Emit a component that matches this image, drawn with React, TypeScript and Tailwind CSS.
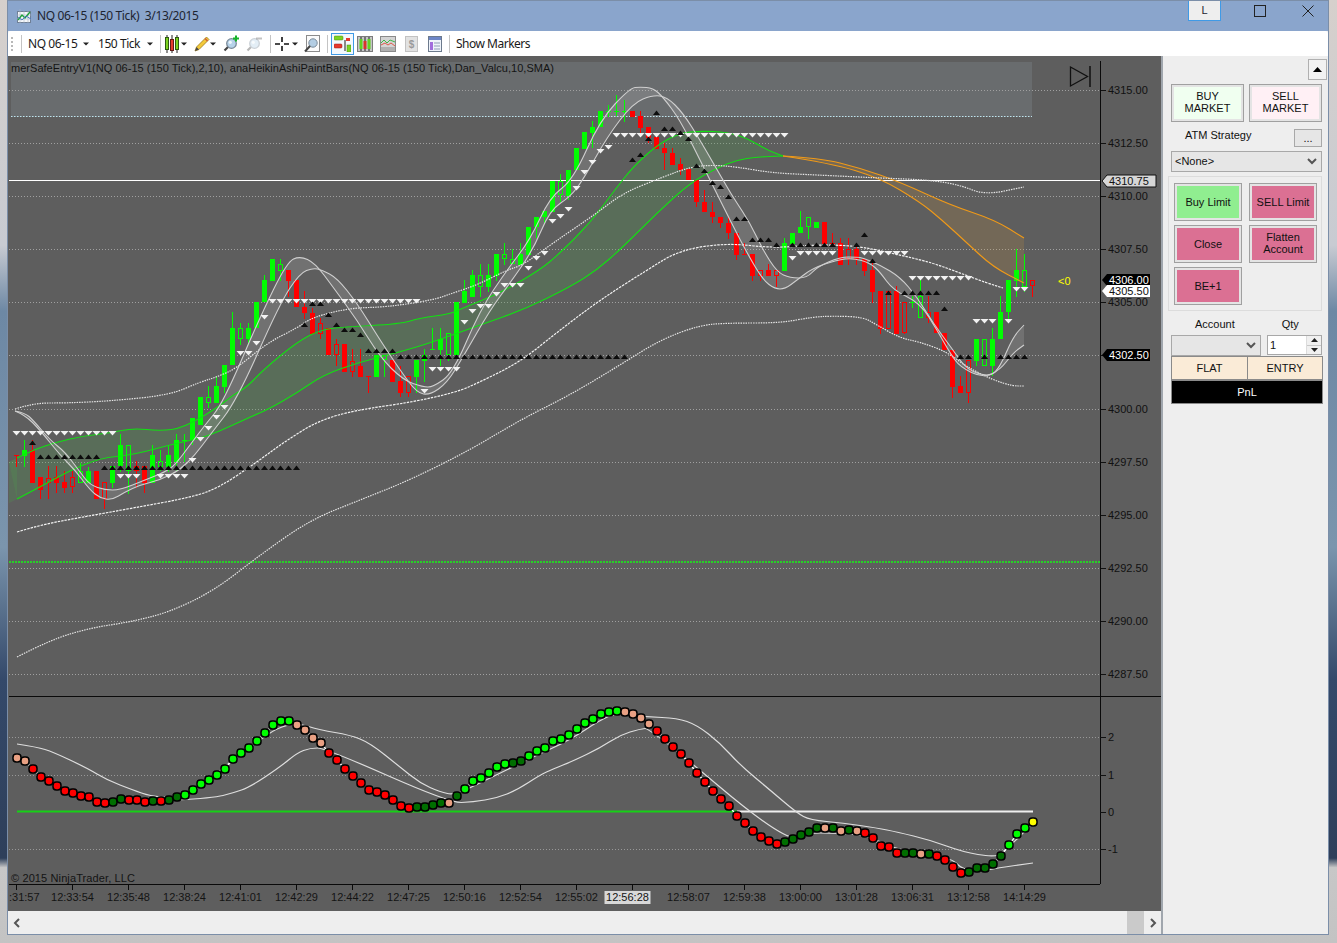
import React from 'react';

type P = [number, number];
type Bar = [number, number, number, number, number, string];

const bars: Bar[] = [
  [16, 455, 456, 455, 467, 'r'], [24, 450, 456, 440, 467, 'g'], [32, 450, 483, 440, 483, 'r'], [40, 477, 490, 477, 499, 'r'],
  [48, 478, 483, 466, 499, 'R'], [56, 477, 483, 466, 493, 'r'], [64, 482, 488, 471, 493, 'r'], [72, 477, 487, 471, 493, 'R'],
  [80, 471, 483, 463, 483, 'G'], [88, 471, 483, 467, 483, 'g'], [96, 471, 499, 471, 499, 'r'], [104, 482, 499, 482, 509, 'R'],
  [112, 466, 483, 466, 488, 'g'], [120, 445, 466, 434, 472, 'g'], [128, 445, 471, 445, 494, 'G'], [136, 466, 471, 461, 488, 'r'],
  [144, 466, 483, 466, 493, 'r'], [152, 455, 483, 445, 483, 'g'], [160, 461, 467, 450, 471, 'G'], [168, 455, 467, 445, 472, 'g'],
  [176, 440, 462, 434, 471, 'g'], [184, 440, 441, 434, 462, 'g'], [192, 418, 440, 418, 445, 'g'], [200, 397, 425, 397, 425, 'g'],
  [208, 397, 403, 386, 408, 'G'], [216, 386, 403, 376, 403, 'g'], [224, 365, 387, 365, 393, 'g'], [232, 328, 365, 312, 365, 'g'],
  [240, 328, 339, 323, 345, 'G'], [248, 328, 339, 323, 345, 'g'], [256, 302, 328, 302, 328, 'g'], [264, 280, 302, 275, 302, 'g'],
  [272, 259, 281, 259, 281, 'g'], [280, 264, 271, 259, 281, 'G'], [288, 270, 281, 270, 297, 'r'], [296, 280, 307, 280, 307, 'r'],
  [304, 307, 313, 291, 319, 'r'], [312, 313, 334, 308, 334, 'r'], [320, 323, 334, 318, 339, 'R'], [328, 328, 355, 328, 355, 'r'],
  [336, 344, 355, 339, 366, 'R'], [344, 344, 372, 344, 372, 'r'], [352, 361, 372, 349, 377, 'R'], [360, 366, 377, 349, 377, 'r'],
  [368, 376, 377, 376, 393, 'r'], [376, 355, 377, 355, 377, 'g'], [384, 355, 360, 355, 377, 'G'], [392, 360, 382, 360, 382, 'r'],
  [400, 381, 393, 366, 397, 'r'], [408, 376, 393, 376, 397, 'R'], [416, 360, 377, 360, 393, 'g'], [424, 355, 361, 349, 382, 'g'],
  [432, 349, 350, 328, 350, 'g'], [440, 339, 350, 328, 366, 'g'], [448, 333, 355, 333, 361, 'G'], [456, 302, 355, 302, 355, 'g'],
  [464, 291, 303, 280, 303, 'g'], [472, 275, 297, 270, 297, 'g'], [480, 275, 287, 264, 297, 'G'], [488, 275, 287, 264, 292, 'g'],
  [496, 254, 276, 254, 281, 'g'], [504, 254, 259, 243, 265, 'G'], [512, 259, 264, 249, 264, 'G'], [520, 254, 265, 243, 265, 'g'],
  [528, 227, 255, 227, 255, 'g'], [536, 217, 227, 217, 238, 'g'], [544, 211, 217, 211, 223, 'g'], [552, 181, 212, 181, 212, 'g'],
  [560, 181, 195, 174, 202, 'G'], [568, 170, 196, 170, 200, 'g'], [576, 148, 170, 148, 170, 'g'], [584, 132, 149, 132, 149, 'g'],
  [592, 127, 133, 121, 148, 'g'], [600, 111, 127, 111, 127, 'g'], [608, 111, 112, 105, 117, 'g'], [616, 111, 112, 95, 116, 'g'],
  [624, 111, 112, 100, 122, 'g'], [632, 111, 117, 111, 117, 'r'], [640, 116, 128, 111, 133, 'r'], [648, 127, 138, 127, 143, 'r'],
  [656, 137, 149, 137, 149, 'r'], [664, 148, 153, 143, 170, 'r'], [672, 153, 165, 148, 165, 'r'], [680, 164, 170, 158, 175, 'r'],
  [688, 169, 180, 169, 180, 'r'], [696, 180, 202, 180, 207, 'r'], [704, 202, 212, 190, 212, 'r'], [712, 212, 217, 202, 223, 'r'],
  [720, 217, 223, 217, 228, 'r'], [728, 223, 233, 217, 239, 'r'], [736, 233, 255, 233, 260, 'r'], [744, 254, 255, 243, 255, 'r'],
  [752, 254, 276, 254, 281, 'r'], [760, 270, 276, 270, 281, 'R'], [768, 270, 276, 264, 276, 'r'], [776, 270, 276, 270, 287, 'R'],
  [784, 243, 271, 238, 271, 'g'], [792, 233, 244, 233, 244, 'g'], [800, 227, 233, 211, 233, 'g'], [808, 217, 227, 217, 239, 'G'],
  [816, 222, 228, 222, 228, 'g'], [824, 222, 244, 222, 244, 'r'], [832, 243, 244, 233, 244, 'r'], [840, 243, 265, 238, 265, 'r'],
  [848, 249, 259, 238, 265, 'R'], [856, 249, 260, 243, 265, 'r'], [864, 259, 271, 259, 276, 'r'], [872, 270, 292, 260, 303, 'r'],
  [880, 291, 329, 291, 334, 'r'], [888, 291, 329, 291, 329, 'R'], [896, 291, 334, 286, 334, 'r'], [904, 302, 333, 302, 334, 'R'],
  [912, 302, 303, 296, 308, 'g'], [920, 296, 318, 279, 318, 'G'], [928, 312, 318, 296, 323, 'R'], [936, 312, 333, 312, 333, 'r'],
  [944, 333, 350, 333, 350, 'r'], [952, 350, 387, 350, 398, 'r'], [960, 386, 393, 376, 393, 'r'], [968, 360, 393, 360, 403, 'R'],
  [976, 339, 361, 339, 366, 'g'], [984, 339, 366, 339, 366, 'G'], [992, 339, 366, 328, 376, 'g'], [1000, 312, 339, 296, 339, 'g'],
  [1008, 280, 312, 280, 320, 'g'], [1016, 270, 281, 249, 297, 'g'], [1024, 270, 287, 254, 292, 'G'], [1032, 280, 286, 280, 297, 'R'],
];

const lineA: P[] = [[15,411],[25,413],[33,420],[50,440],[65,452],[80,472],[90,485],[105,490],[120,490],[145,480],[165,472],[175,465],[190,445],[205,425],[223,403],[260,317],[287,262],[300,256],[315,263],[333,287],[357,320],[380,357],[403,380],[423,387],[433,387],[453,373],[480,310],[507,270],[530,240],[550,197],[573,180],[600,120],[630,88],[640,87],[653,88],[663,97],[680,120],[700,160],[715,190],[730,220],[747,253],[763,280],[775,289],[785,289],[797,280],[813,268],[837,260],[853,258],[870,263],[880,272],[893,290],[920,303],[937,330],[950,353],[960,367],[983,378],[1000,370],[1013,353],[1024,345]];
const lineB: P[] = [[15,411],[25,415],[40,430],[60,455],[75,470],[90,490],[100,498],[112,500],[125,492],[140,485],[160,480],[180,470],[195,455],[210,435],[237,400],[280,303],[300,273],[313,268],[322,270],[337,278],[357,303],[380,340],[400,370],[417,393],[430,395],[447,383],[463,357],[490,310],[510,283],[533,250],[550,210],[570,197],[583,180],[607,137],[633,103],[653,95],[667,97],[683,113],[700,140],[727,187],[735,200],[750,223],[763,250],[777,272],[790,278],[807,278],[817,267],[840,257],[857,257],[863,258],[880,265],[900,277],[917,297],[933,323],[953,350],[967,370],[990,377],[1000,367],[1013,337],[1024,325]];
const cloudUp: P[] = [[17,458],[33,450],[57,442],[83,436],[110,433],[133,428],[160,431],[183,428],[217,408],[233,395],[247,387],[263,370],[297,342],[320,330],[343,327],[400,324],[420,318],[450,314],[463,308],[500,293],[540,270],[560,253],[590,223],[617,187],[633,167],[657,145],[680,133],[700,131],[727,132],[747,138],[767,150],[783,156]];
const cloudLo: P[] = [[17,499],[40,487],[67,472],[100,458],[133,455],[177,443],[207,437],[250,417],[267,410],[297,393],[323,375],[360,362],[400,352],[433,342],[480,325],[523,310],[570,287],[597,270],[623,247],[657,213],[690,183],[717,168],[737,160],[757,157],[783,156]];
const orUp: P[] = [[783,156],[820,158],[860,168],[900,182],[950,205],[995,220],[1024,238]];
const orLo: P[] = [[783,156],[830,163],[880,178],[920,202],[942,220],[967,243],[993,267],[1024,283]];
const dotTop: P[] = [[15,409],[33,403],[67,403],[110,401],[170,395],[200,382],[217,377],[237,368],[267,343],[297,328],[313,317],[350,308],[387,307],[433,300],[453,293],[477,285],[507,270],[523,265],[553,243],[597,213],[623,193],[663,177],[690,167],[713,165],[737,167],[773,173],[817,175],[880,178],[930,180],[960,185],[985,195],[1024,187]];
const dotMid: P[] = [[17,532],[40,525],[83,517],[133,508],[193,497],[220,487],[257,462],[287,440],[320,420],[357,410],[413,402],[457,392],[480,382],[520,362],[560,330],[600,300],[647,270],[680,250],[727,243],[773,248],[813,245],[837,245],[863,247],[900,255],[933,263],[960,273],[987,283],[1003,288]];
const dotLow: P[] = [[17,657],[50,640],[90,628],[130,622],[170,612],[215,590],[260,555],[310,520],[360,500],[410,480],[470,450],[520,420],[570,395],[620,365],[660,340],[700,325],[730,323],[780,323],[813,317],[833,316],[863,317],[877,325],[900,338],[920,342],[947,352],[967,367],[993,380],[1013,386],[1024,386]];
const oscTop: P[] = [[17,744],[37,747],[53,752],[87,768],[107,780],[133,790],[150,796],[173,798],[197,790],[230,762],[257,742],[277,728],[297,723],[320,730],[350,735],[370,743],[400,767],[420,783],[440,792],[455,795],[480,783],[533,757],[570,740],[600,720],[617,713],[647,717],[677,718],[697,725],[720,743],[740,765],[770,790],[797,813],[810,820],[843,823],[877,828],[897,832],[930,840],[963,852],[993,857],[1003,853],[1033,823]];
const oscLow: P[] = [[177,800],[213,798],[233,793],[250,787],[280,767],[297,753],[310,748],[325,748],[450,803],[473,802],[497,798],[517,790],[540,775],[553,769],[573,761],[600,748],[620,735],[640,729],[650,728],[785,842],[810,833],[830,833],[853,834],[873,838],[897,850],[950,857],[963,870],[983,871],[997,868],[1033,863]];

const dotY = [758,761,769,777,781,786,791,793,796,797,802,803,802,799,800,800,802,801,801,800,797,795,790,784,780,775,769,759,753,748,741,733,725,721,721,725,730,738,743,753,760,769,776,783,790,792,795,800,806,808,807,807,805,803,803,796,789,781,778,773,767,764,763,761,756,751,748,741,739,735,729,723,719,714,712,711,712,714,718,724,731,739,747,754,763,773,782,791,799,806,816,823,831,837,841,844,842,839,835,832,828,828,828,831,830,831,833,838,846,847,853,853,853,854,854,856,860,867,873,872,868,868,864,856,845,834,828,822];

const RED = '#ff0000', LIME = '#00ff00', DK = '#006e00', SAL = '#e9a083', YEL = '#ffff00';
function dotColor(x: number): string {
  if (x === 1033) return YEL;
  if (x === 17 || x === 25) return SAL;
  if (x >= 297 && x <= 321) return SAL;
  if (x === 449 || (x >= 625 && x <= 649) || x === 825 || x === 841 || x === 857 || x === 921) return SAL;
  if ([113, 121, 153, 169, 177].includes(x)) return DK;
  if ((x >= 417 && x <= 441) || x === 457 || x === 513 || x === 521) return DK;
  if ((x >= 785 && x <= 817) || x === 833 || x === 849 || x === 905 || x === 913 || x === 929) return DK;
  if (x >= 969 && x <= 1001) return DK;
  if ((x >= 185 && x <= 289) || (x >= 465 && x <= 505) || (x >= 529 && x <= 617) || (x >= 1009 && x <= 1025)) return LIME;
  return RED;
}

function smooth(pts: P[]): string {
  let d = `M${pts[0][0]} ${pts[0][1]}`;
  for (let i = 1; i < pts.length - 1; i++) {
    const mx = (pts[i][0] + pts[i + 1][0]) / 2;
    const my = (pts[i][1] + pts[i + 1][1]) / 2;
    d += ` Q${pts[i][0]} ${pts[i][1]} ${mx} ${my}`;
  }
  const l = pts[pts.length - 1];
  return d + ` L${l[0]} ${l[1]}`;
}
function band(a: P[], b: P[]): string {
  const back = smooth([...b].reverse()).replace(/^M/, 'L');
  return `${smooth(a)} ${back} Z`;
}
function range(a: number, b: number, s = 8): number[] {
  const r: number[] = [];
  for (let i = a; i <= b; i += s) r.push(i);
  return r;
}

const whiteTri: P[] = [
  ...range(16, 112).map((x) => [x, 433] as P),
  ...[120, 128, 136, 160, 168, 176, 184].map((x) => [x, 476] as P),
  [192, 460], [200, 439], [208, 428], [216, 417], [224, 407], [240, 353], [248, 353], [256, 343], [264, 317],
  ...range(272, 416).map((x) => [x, 301] as P),
  [424, 391], [432, 369], [440, 369], [448, 369], [456, 369], [464, 322], [472, 311], [480, 306], [488, 306], [496, 294], [504, 285], [512, 285], [520, 285], [528, 268], [536, 258], [544, 253], [552, 221], [560, 216], [568, 209], [576, 188], [584, 172], [592, 162], [600, 151], [608, 147],
  ...range(616, 784).map((x) => [x, 135] as P),
  [792, 258],
  ...range(800, 832).map((x) => [x, 253] as P),
  ...range(864, 904).map((x) => [x, 253] as P),
  ...range(912, 968).map((x) => [x, 278] as P),
  [976, 321], [984, 321], [992, 321], [1008, 321], [1016, 289], [1024, 289],
];
const blackTri: P[] = [
  [32, 443],
  ...range(40, 96).map((x) => [x, 457] as P),
  ...range(104, 296).map((x) => [x, 468] as P),
  [312, 304], [320, 304], [328, 315], [304, 325], [336, 325], [344, 330], [352, 330], [360, 335], [368, 351], [376, 351], [384, 351], [392, 351],
  ...range(400, 628).map((x) => [x, 357] as P),
  [656, 113], [664, 129], [672, 129], [680, 133], [688, 139], [648, 139], [640, 155], [632, 160], [696, 166], [704, 171], [712, 183], [720, 187], [728, 197], [736, 219], [744, 219], [752, 240], [760, 240], [768, 240], [776, 245],
  ...range(792, 832).map((x) => [x, 245] as P),
  [856, 245], [864, 235], [872, 261], [888, 293],
  ...range(904, 936).map((x) => [x, 293] as P),
  [944, 309], [960, 357], [968, 357], [984, 357], [1000, 357], [1008, 357], [1016, 357], [1024, 357],
];

const prices = ['4315.00', '4312.50', '4310.00', '4307.50', '4305.00', '4302.50', '4300.00', '4297.50', '4295.00', '4292.50', '4290.00', '4287.50'];
const times = ['12:33:54', '12:35:48', '12:38:24', '12:41:01', '12:42:29', '12:44:22', '12:47:25', '12:50:16', '12:52:54', '12:55:02', '12:56:28', '12:58:07', '12:59:38', '13:00:00', '13:01:28', '13:06:31', '13:12:58', '14:14:29'];
const GRID = '#a0a0a0';
const F = '"Liberation Sans", Arial, sans-serif';

function PriceTag({ y, fill, color, label, w = 50, stroke }: { y: number; fill: string; color: string; label: string; w?: number; stroke?: string }) {
  return (
    <g>
      <polygon points={`1102,${y} 1107,${y - 6} ${1104 + w},${y - 6} ${1104 + w},${y + 6} 1107,${y + 6}`} fill={fill} stroke={stroke} strokeWidth={stroke ? 1 : 0} />
      <text x={1109} y={y + 4} fontSize={11} fill={color} fontFamily={F}>{label}</text>
    </g>
  );
}

function Chart() {
  return (
    <svg width={1153} height={855} viewBox="8 56 1153 855" className="block">
      <rect x={8} y={56} width={1153} height={855} fill="#5e5e5e" />
      <rect x={11} y={62} width={1021} height={55} fill="#696c6e" />
      {prices.map((p, i) => {
        const y = Math.round(90 + i * 53.09);
        return (
          <g key={p}>
            <line x1={9} x2={1100} y1={y + 0.5} y2={y + 0.5} stroke={GRID} strokeDasharray="1 2" />
            <line x1={1100} x2={1106} y1={y + 0.5} y2={y + 0.5} stroke="#111" />
            <text x={1108} y={y + 4} fontSize={11} fill="#111" fontFamily={F}>{p}</text>
          </g>
        );
      })}
      <line x1={11} x2={1032} y1={116.5} y2={116.5} stroke="#bfe4ee" strokeDasharray="1.5 1.5" />
      <path d={`M9 462 L17 458 ${band(cloudUp, cloudLo).replace(/^M/, 'L')}`} fill="#4f9a4f" fillOpacity={0.26} />
      <polygon points="9,462 17,458 17,499 9,503" fill="#4f9a4f" fillOpacity={0.26} />
      <path d={band(orUp, orLo)} fill="#d99a35" fillOpacity={0.17} />
      <path d={band(lineA, lineB)} fill="#ffffff" fillOpacity={0.12} />
      <line x1={9} x2={1100} y1={180.5} y2={180.5} stroke="#ffffff" />
      <line x1={9} x2={1100} y1={562} y2={562} stroke="#28d028" strokeWidth={2} strokeDasharray="2 1" />
      {bars.map(([x0, t, b, wt, wb, k]) => {
        const x = x0 + 0.5;
        const green = k === 'g' || k === 'G';
        const c = green ? '#00ff00' : '#ff0000';
        const hollow = k === 'G' || k === 'R';
        return (
          <g key={x0}>
            {hollow ? (
              <>
                <line x1={x} x2={x} y1={wt} y2={t} stroke={c} />
                <line x1={x} x2={x} y1={b} y2={wb} stroke={c} />
                <rect x={x - 2} y={t + 0.5} width={4} height={Math.max(b - t - 1, 1)} fill="none" stroke={c} />
              </>
            ) : (
              <>
                <line x1={x} x2={x} y1={wt} y2={wb} stroke={c} />
                <rect x={x - 2.5} y={t} width={5} height={Math.max(b - t, 1)} fill={c} />
              </>
            )}
          </g>
        );
      })}
      {[cloudUp, cloudLo].map((l, i) => (
        <path key={i} d={smooth(l)} fill="none" stroke="#12e012" strokeWidth={1.1} />
      ))}
      {[orUp, orLo].map((l, i) => (
        <path key={i} d={smooth(l)} fill="none" stroke="#f09a18" strokeWidth={1.1} />
      ))}
      <path d={smooth(dotTop)} fill="none" stroke="#e6e6e6" strokeWidth={1.2} strokeDasharray="1.5 1" />
      <path d={smooth(dotMid)} fill="none" stroke="#f4f4f4" strokeWidth={1.2} strokeDasharray="2.5 1" />
      <path d={smooth(dotLow)} fill="none" stroke="#e6e6e6" strokeWidth={1.2} strokeDasharray="1.5 1" />
      {[lineA, lineB].map((l, i) => (
        <path key={i} d={smooth(l)} fill="none" stroke="#cfcfcf" strokeWidth={1.1} />
      ))}
      {whiteTri.map(([x, y], i) => (
        <polygon key={i} points={`${x - 3.5},${y - 2} ${x + 4.5},${y - 2} ${x + 0.5},${y + 2.5}`} fill="#f2f2f2" />
      ))}
      {blackTri.map(([x, y], i) => (
        <polygon key={i} points={`${x - 3},${y + 2} ${x + 4},${y + 2} ${x + 0.5},${y - 2.5}`} fill="#0c0c0c" />
      ))}
      <text x={11} y={72} fontSize={11} fill="#141414" fontFamily={F} textLength={543} lengthAdjust="spacing">merSafeEntryV1(NQ 06-15 (150 Tick),2,10), anaHeikinAshiPaintBars(NQ 06-15 (150 Tick),Dan_Valcu,10,SMA)</text>
      <path d="M1070.5 67 L1087.5 76.5 L1070.5 86 Z" fill="none" stroke="#111" strokeWidth={1.3} />
      <line x1={1090} x2={1090} y1={66} y2={87} stroke="#111" strokeWidth={1.5} />
      <text x={1058} y={285} fontSize={11} fill="#ffff00" fontFamily={F}>{'<0'}</text>

      <line x1={1100.5} x2={1100.5} y1={61} y2={884} stroke="#0a0a0a" />
      <line x1={9} x2={1161} y1={696.5} y2={696.5} stroke="#0a0a0a" />
      <PriceTag y={181} fill="#d6d6d6" color="#111" label="4310.75" w={52} stroke="#111" />
      <PriceTag y={280} fill="#000" color="#fff" label="4306.00" w={46} />
      <PriceTag y={291} fill="#fff" color="#111" label="4305.50" w={46} />
      <PriceTag y={355} fill="#000" color="#fff" label="4302.50" w={46} />

      {[[737, '2'], [775, '1'], [812, '0'], [849, '-1']].map(([y, l]) => (
        <g key={l}>
          {l !== '0' && <line x1={9} x2={1100} y1={Number(y) + 0.5} y2={Number(y) + 0.5} stroke="#989898" strokeDasharray="1 2" />}
          <line x1={1100} x2={1106} y1={Number(y) + 0.5} y2={Number(y) + 0.5} stroke="#111" />
          <text x={1108} y={Number(y) + 4} fontSize={11} fill="#111" fontFamily={F}>{l}</text>
        </g>
      ))}
      <line x1={17} x2={737} y1={811.5} y2={811.5} stroke="#16d016" strokeWidth={2} />
      <line x1={737} x2={1033} y1={811.5} y2={811.5} stroke="#efefef" strokeWidth={2} />
      <path d={smooth(oscTop)} fill="none" stroke="#dedede" strokeWidth={1.2} />
      <path d={smooth(oscLow)} fill="none" stroke="#dedede" strokeWidth={1.2} />
      <polyline points={dotY.map((y, i) => `${17 + 8 * i},${y}`).join(' ')} fill="none" stroke="#ffffff" strokeWidth={1.3} />
      {dotY.map((y, i) => (
        <rect key={i} x={17 + 8 * i - 4} y={y - 4} width={8} height={8} rx={3.2} fill={dotColor(17 + 8 * i)} stroke="#000" strokeWidth={1.5} />
      ))}
      <text x={11} y={882} fontSize={11} fill="#141414" fontFamily={F} textLength={124} lengthAdjust="spacing">© 2015 NinjaTrader, LLC</text>
      <line x1={9} x2={1100} y1={884.5} y2={884.5} stroke="#0a0a0a" />
      <line x1={16.5} x2={16.5} y1={884} y2={890} stroke="#0a0a0a" />
      <text x={9} y={901} fontSize={11} fill="#141414" fontFamily={F}>:31:57</text>
      {times.map((t, i) => {
        const x = 72.5 + i * 56;
        const hot = t === '12:56:28';
        return (
          <g key={t}>
            <line x1={x} x2={x} y1={884} y2={890} stroke="#0a0a0a" />
            {hot && <rect x={x - 28} y={891} width={46} height={13} fill="#d8d8d8" />}
            <text x={hot ? x - 5 : x} y={901} fontSize={11} textAnchor="middle" fill="#141414" fontFamily={F}>{t}</text>
          </g>
        );
      })}
    </svg>
  );
}

function Caret() {
  return (
    <svg width="6" height="4" viewBox="0 0 6 4" className="shrink-0">
      <path d="M0 0.5H6L3 3.5Z" fill="#222" />
    </svg>
  );
}
function Sep({ className }: { className: string }) {
  return <div className={`w-px h-[18px] bg-[#c4c4c4] shrink-0 ${className}`} />;
}

function TitleIcon() {
  return (
    <svg width="15" height="15" viewBox="0 0 15 15">
      <rect x="0.5" y="2.5" width="13" height="11" fill="#f5f7fa" stroke="#6f7f95" />
      <path d="M3 0v15M7 2v12M11 2v12M0 6h14M0 10h14" stroke="#a9b6c8" strokeWidth="0.6" />
      <path d="M1 11L5 6l3 3 5-6" fill="none" stroke="#1ea23a" strokeWidth="1.4" />
      <path d="M1 8l4 3 4-4 5 3" fill="none" stroke="#3f6fc0" strokeWidth="0.9" />
    </svg>
  );
}
function CandlesIcon() {
  return (
    <svg width="14" height="20" viewBox="0 0 14 20">
      <path d="M2 1v18M7 1v18M12 1v18" stroke="#222" />
      <rect x="0.5" y="3.5" width="3" height="12" fill="#7cd321" stroke="#2d5a10" />
      <rect x="5.5" y="5.5" width="3" height="11" fill="#e63b2e" stroke="#641a14" />
      <rect x="10.5" y="3.5" width="3" height="12" fill="#7cd321" stroke="#2d5a10" />
    </svg>
  );
}
function PencilIcon() {
  return (
    <svg width="16" height="16" viewBox="0 0 16 16">
      <path d="M12.5 1L15 3.5 5 13.5 1 15l1.5-4Z" fill="#f3c93a" stroke="#9a7a1c" strokeWidth="0.8" />
      <path d="M1 15l1.5-4 2.5 2.5Z" fill="#4a4a4a" />
      <path d="M11 2.5L13.5 5" stroke="#d05b3a" strokeWidth="1.4" />
    </svg>
  );
}
function ZoomIcon({ plus }: { plus?: boolean }) {
  const op = plus ? 1 : 0.38;
  return (
    <svg width="16" height="17" viewBox="0 0 16 17">
      <g opacity={op}>
        <path d="M6 11L1.5 15.5" stroke="#444" strokeWidth="2.2" />
        <circle cx="8.5" cy="8.5" r="4.8" fill="#b7d3ea" stroke="#7b8b99" strokeWidth="1.3" />
        <circle cx="7.3" cy="7.3" r="1.6" fill="#eef6fb" />
      </g>
      {plus ? <path d="M13 0.5v6M10 3.5h6" stroke="#16b32a" strokeWidth="2" /> : <path d="M10 3.5h6" stroke="#888" strokeWidth="2" opacity="0.5" />}
    </svg>
  );
}
function CrossIcon() {
  return (
    <svg width="14" height="14" viewBox="0 0 14 14">
      <path d="M7 0v5M7 9v5M0 7h5M9 7h5" stroke="#111" strokeWidth="1.6" />
    </svg>
  );
}
function PageZoomIcon() {
  return (
    <svg width="16" height="18" viewBox="0 0 16 18">
      <rect x="2.5" y="0.5" width="13" height="16" fill="#fbfbfb" stroke="#8c8c8c" />
      <circle cx="9" cy="8" r="4.2" fill="#b3cde3" stroke="#7b8b99" />
      <path d="M6 11L1 16.5" stroke="#444" strokeWidth="2" />
    </svg>
  );
}
function ActiveIcon() {
  return (
    <div className="w-[23px] h-[22px] ml-[3px] border border-[#3f9ae6] bg-[#f3f8fd] flex items-center justify-center shrink-0">
      <svg width="17" height="17" viewBox="0 0 17 17">
        <rect x="10" y="5" width="2" height="11" fill="#8a8a8a" />
        <rect x="0" y="1" width="9" height="4" rx="1" fill="#7cd321" stroke="#4d8a12" strokeWidth="0.5" />
        <rect x="0" y="9" width="8" height="4" rx="1" fill="#e6382e" stroke="#9a1a14" strokeWidth="0.5" />
        <rect x="13" y="10" width="4" height="7" fill="#7cd321" stroke="#4d8a12" strokeWidth="0.5" />
        <rect x="12" y="3" width="4" height="3" fill="#e6382e" />
      </svg>
    </div>
  );
}
function BoxCandle() {
  return (
    <svg width="16" height="16" viewBox="0 0 16 16">
      <rect x="0.5" y="0.5" width="15" height="15" fill="#c6c6c6" stroke="#7c7c7c" />
      <path d="M4 1v14M8 1v14M12 1v14" stroke="#222" />
      <rect x="2.5" y="3" width="3" height="10" fill="#5fd321" />
      <rect x="6.5" y="5" width="3" height="8" fill="#d8352a" />
      <rect x="10.5" y="3" width="3" height="10" fill="#5fd321" />
    </svg>
  );
}
function BoxChart() {
  return (
    <svg width="16" height="16" viewBox="0 0 16 16">
      <rect x="0.5" y="0.5" width="15" height="15" fill="#d4d4d4" stroke="#8a8a8a" />
      <rect x="1" y="11" width="14" height="4" fill="#b0b0b0" />
      <path d="M1 7l3-3 3 3 3-3 5 2" fill="none" stroke="#41b54a" />
      <path d="M1 9l4-2 3 2 3-2 4 3" fill="none" stroke="#dd5a4a" />
    </svg>
  );
}
function BoxDollar() {
  return (
    <svg width="13" height="16" viewBox="0 0 13 16">
      <rect x="0.5" y="0.5" width="12" height="15" fill="#e2e2e2" stroke="#c2c2c2" />
      <text x="6.5" y="12" fontSize="10" fontWeight="700" textAnchor="middle" fill="#9a9a9a" fontFamily={F}>$</text>
    </svg>
  );
}
function BoxForm() {
  return (
    <svg width="14" height="16" viewBox="0 0 14 16">
      <rect x="0.5" y="0.5" width="13" height="15" fill="#eef3fa" stroke="#6c7a8c" />
      <rect x="1" y="1" width="12" height="3" fill="#6d86c7" />
      <rect x="2" y="6" width="3" height="8" fill="#a16ddc" />
      <path d="M6 7h6M6 10h6M6 13h6" stroke="#8d9bb5" />
    </svg>
  );
}

function Chevron() {
  return (
    <svg width="10" height="7" viewBox="0 0 10 7">
      <path d="M1 1l4 4 4-4" fill="none" stroke="#555" strokeWidth="2" />
    </svg>
  );
}

function OuterBtn({ fill, children, w = 'w-[68px]' }: { fill: string; children: React.ReactNode; w?: string }) {
  return (
    <div className={`${w} h-[38px] border border-[#a0a0a0] p-[2px] bg-[#e4e4e4] shrink-0`}>
      <div className={`w-full h-full flex items-center justify-center text-center leading-[12px] text-[11px] text-[#111] ${fill}`}>{children}</div>
    </div>
  );
}

function Panel() {
  return (
    <div className="w-[165px] h-full bg-[#eeeeee] text-[11px] text-[#111] font-['Liberation_Sans',Arial,sans-serif]">
      <div className="flex justify-end pt-[3px] pr-px">
        <div className="w-[19px] h-[21px] border border-[#b0b0b0] bg-[#f2f2f2] flex items-center justify-center">
          <svg width="9" height="5" viewBox="0 0 9 5"><path d="M0 5L4.5 0 9 5Z" fill="#000" /></svg>
        </div>
      </div>
      <div className="flex gap-[5px] ml-2 mt-1">
        <OuterBtn w="w-[73px]" fill="bg-[#f0fff0]"><span className="mb-[2px]">BUY<br />MARKET</span></OuterBtn>
        <OuterBtn w="w-[73px]" fill="bg-[#fff0f5]"><span className="mb-[2px]">SELL<br />MARKET</span></OuterBtn>
      </div>
      <div className="flex items-center h-[18px] mt-[7px]">
        <span className="ml-[22px] mb-[6px]">ATM Strategy</span>
        <div className="ml-auto mr-[6px] w-[28px] h-[18px] border border-[#a8a8a8] bg-[#e6e6e6] flex items-center justify-center leading-none">...</div>
      </div>
      <div className="ml-2 mt-1 w-[151px] h-[21px] border border-[#a8a8a8] bg-[#e6e6e6] flex items-center justify-between pl-[3px] pr-[4px]">
        <span>&lt;None&gt;</span>
        <Chevron />
      </div>
      <div className="ml-[5px] mt-1 w-[154px] h-[135px] border border-[#dcdcdc] pt-[6px] pl-[5px]">
        <div className="grid grid-cols-[68px_68px] gap-x-[7px] gap-y-[4px]">
          <OuterBtn fill="bg-[#90ee90]">Buy Limit</OuterBtn>
          <OuterBtn fill="bg-[#db7093]">SELL Limit</OuterBtn>
          <OuterBtn fill="bg-[#db7093]">Close</OuterBtn>
          <OuterBtn fill="bg-[#db7093]"><span className="mb-[2px]">Flatten<br />Account</span></OuterBtn>
          <OuterBtn fill="bg-[#db7093]">BE+1</OuterBtn>
        </div>
      </div>
      <div className="flex h-[14px] mt-[6px] leading-[14px]">
        <span className="ml-8">Account</span>
        <span className="ml-[47px]">Qty</span>
      </div>
      <div className="flex mt-[4px] ml-2 h-[21px]">
        <div className="w-[90px] h-[21px] border border-[#a8a8a8] bg-[#e6e6e6] flex items-center justify-end pr-[4px]">
          <Chevron />
        </div>
        <div className="ml-[6px] w-[55px] h-[20px] border border-[#a8a8a8] bg-white flex items-center pl-[2px]">
          <span className="flex-1">1</span>
          <div className="w-[15px] h-full flex flex-col border-l border-[#dcdcdc] bg-[#f0f0f0]">
            <div className="flex-1 flex items-center justify-center border-b border-[#c8c8c8]"><svg width="7" height="4" viewBox="0 0 7 4"><path d="M0 4L3.5 0 7 4Z" fill="#222" /></svg></div>
            <div className="flex-1 flex items-center justify-center"><svg width="7" height="4" viewBox="0 0 7 4"><path d="M0 0L3.5 4 7 0Z" fill="#222" /></svg></div>
          </div>
        </div>
      </div>
      <div className="ml-2 w-[152px] h-[24px] flex border border-[#8a8a8a] bg-[#faebd7]">
        <div className="w-[76px] flex items-center justify-center border-r border-[#8a8a8a]">FLAT</div>
        <div className="flex-1 flex items-center justify-center">ENTRY</div>
      </div>
      <div className="ml-2 w-[152px] h-[24px] flex items-center justify-center bg-black text-white border border-[#8a8a8a]">PnL</div>
    </div>
  );
}

export default function App() {
  return (
    <div className="w-[1337px] h-[943px] overflow-hidden pl-[7px] pr-[8px] pb-[8px] bg-[linear-gradient(180deg,#d6d0cc_0%,#c8cbd2_26%,#6d88a4_33%,#7b95ad_58%,#34496a_72%,#2e3f5a_91%,#c7c7c7_92%,#c3c3c3_100%)]">
      <div className="h-full border border-[#7b8ea8] flex flex-col bg-[#eeeeee]">
        <div className="h-[30px] bg-[#8aa5cc] flex items-center shrink-0 font-['Noto_Sans',sans-serif] text-[12px] text-[#1d2430]">
          <div className="ml-[9px]"><TitleIcon /></div>
          <span className="ml-[5px] mb-[1px] whitespace-pre tracking-[-0.35px]">NQ 06-15 (150 Tick)  3/13/2015</span>
          <div className="ml-auto flex items-center self-start">
            <div className="w-[33px] h-[20px] border border-[#3f9ae6] border-t-0 bg-[#eeeeee] flex items-center justify-center text-[11px] font-['Liberation_Sans',sans-serif]">L</div>
            <svg width="12" height="12" viewBox="0 0 12 12" className="ml-[33px]"><rect x="0.5" y="0.5" width="11" height="11" fill="none" stroke="#222" /></svg>
            <svg width="12" height="12" viewBox="0 0 12 12" className="ml-[36px] mr-[14px]"><path d="M0.5 0.5l11 11M11.5 0.5l-11 11" stroke="#222" /></svg>
          </div>
        </div>
        <div className="h-[25px] bg-white rounded-t-[3px] flex items-center shrink-0 font-['Noto_Sans',sans-serif] text-[12px] text-[#1a1a1a]">
          <div className="ml-[3px] w-[2px] h-[14px] border-l-2 border-dotted border-[#b8b8b8] shrink-0" />
          <Sep className="ml-[8px]" />
          <span className="ml-[6px] w-[50px] tracking-[-0.45px] whitespace-nowrap">NQ 06-15</span>
          <div className="ml-[5px]"><Caret /></div>
          <span className="ml-[9px] w-[43px] tracking-[-0.45px] whitespace-nowrap">150 Tick</span>
          <div className="ml-[6px]"><Caret /></div>
          <Sep className="ml-[7px]" />
          <div className="ml-[4px]"><CandlesIcon /></div>
          <div className="ml-[2px]"><Caret /></div>
          <div className="ml-[7px]"><PencilIcon /></div>
          <div className="ml-0"><Caret /></div>
          <div className="ml-[7px]"><ZoomIcon plus /></div>
          <div className="ml-[7px]"><ZoomIcon /></div>
          <Sep className="ml-[8px]" />
          <div className="ml-[4px]"><CrossIcon /></div>
          <div className="ml-[3px]"><Caret /></div>
          <div className="ml-[6px]"><PageZoomIcon /></div>
          <Sep className="ml-[7px]" />
          <ActiveIcon />
          <div className="ml-[3px]"><BoxCandle /></div>
          <div className="ml-[7px]"><BoxChart /></div>
          <div className="ml-[9px]"><BoxDollar /></div>
          <div className="ml-[10px]"><BoxForm /></div>
          <Sep className="ml-[7px]" />
          <span className="ml-[6px] tracking-[-0.5px] whitespace-nowrap">Show Markers</span>
        </div>
        <div className="flex flex-1 min-h-0">
          <div className="w-[1153px] flex flex-col shrink-0">
            <Chart />
            <div className="flex-1 flex items-center bg-[#eeeeee]">
              <svg width="7" height="10" viewBox="0 0 7 10" className="ml-[5px]"><path d="M6 1L2 5l4 4" fill="none" stroke="#555" strokeWidth="2" /></svg>
              <div className="ml-auto w-[17px] h-full bg-[#cacaca]" />
              <svg width="7" height="10" viewBox="0 0 7 10" className="ml-[6px] mr-[4px]"><path d="M1 1l4 4-4 4" fill="none" stroke="#555" strokeWidth="2" /></svg>
            </div>
          </div>
          <div className="w-[2px] bg-[#a0a6ad] shrink-0" />
          <Panel />
        </div>
      </div>
    </div>
  );
}
